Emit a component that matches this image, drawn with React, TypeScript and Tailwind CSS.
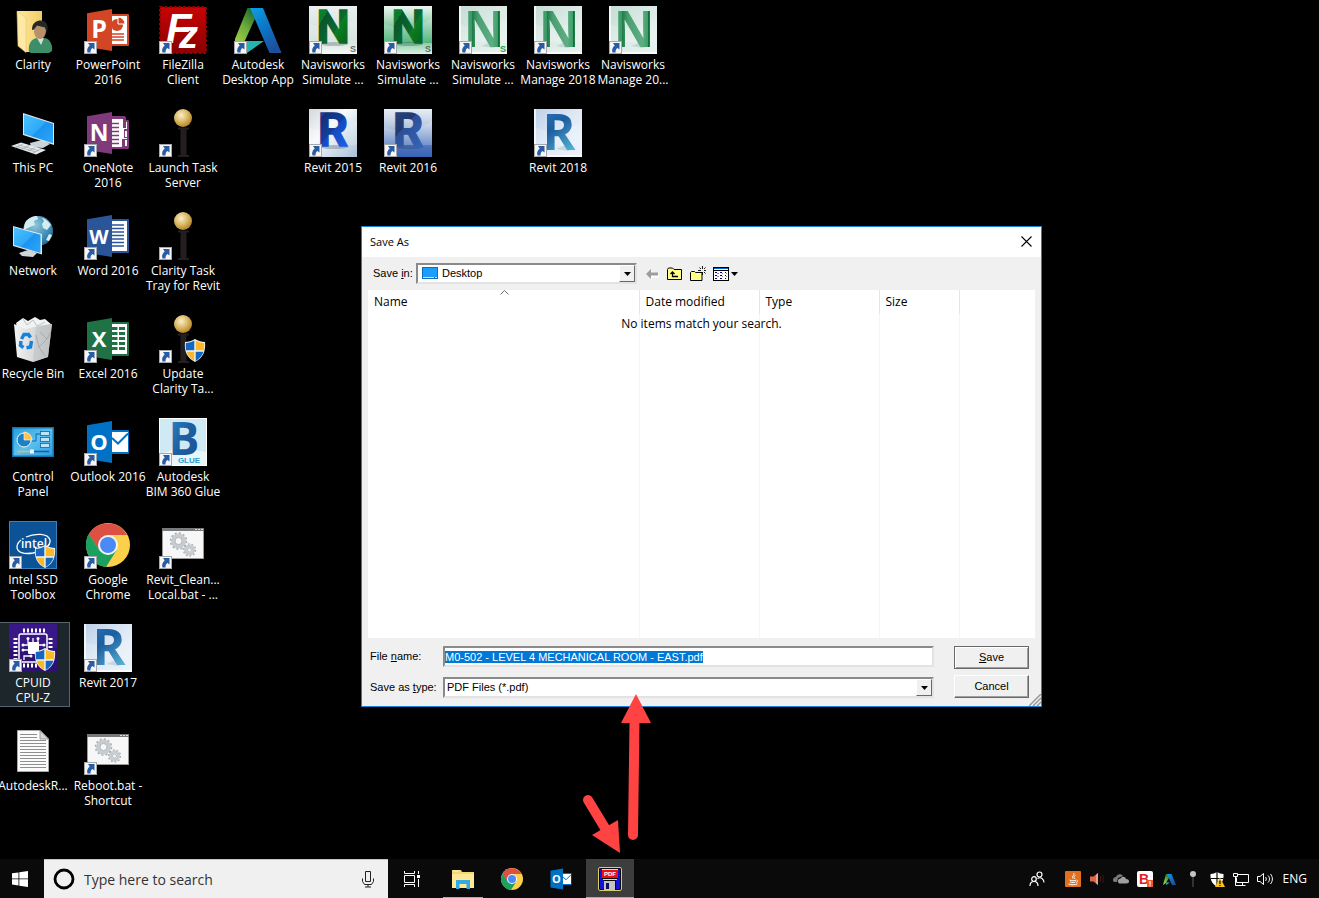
import { useEffect, useRef, type ReactNode } from "react"
import { clsx } from "clsx"

type IconProps = { className?: string }

// Gradients shared by all icons on the page
const Gradients = () => (
  <svg className="absolute size-0" aria-hidden="true">
    <defs>
      <linearGradient id="screen" x1="0" y1="0" x2="1" y2="1">
        <stop offset="0" stopColor="#4cc2ff" />
        <stop offset="0.5" stopColor="#2fa9f8" />
        <stop offset="0.52" stopColor="#1a94ee" />
        <stop offset="1" stopColor="#2ea6ff" />
      </linearGradient>
      <linearGradient id="folder" x1="0" y1="0" x2="1" y2="0">
        <stop offset="0" stopColor="#ffe9a2" />
        <stop offset="1" stopColor="#f0cd66" />
      </linearGradient>
      <linearGradient id="fz" x1="0" y1="0" x2="0" y2="1">
        <stop offset="0" stopColor="#c80404" />
        <stop offset="1" stopColor="#8a0000" />
      </linearGradient>
      <linearGradient id="adskGreen" x1="0.7" y1="0" x2="0.2" y2="1">
        <stop offset="0" stopColor="#1d6b2b" />
        <stop offset="0.5" stopColor="#6fae3c" />
        <stop offset="1" stopColor="#a4d04a" />
      </linearGradient>
      <linearGradient id="adskBlue" x1="0" y1="0" x2="0.6" y2="1">
        <stop offset="0" stopColor="#0f9fe2" />
        <stop offset="0.5" stopColor="#0c78c8" />
        <stop offset="1" stopColor="#1d4f9f" />
      </linearGradient>
      <radialGradient id="ball" cx="0.4" cy="0.35" r="0.7">
        <stop offset="0" stopColor="#fbeecb" />
        <stop offset="0.5" stopColor="#dcbb6a" />
        <stop offset="1" stopColor="#b07f1c" />
      </radialGradient>
      <radialGradient id="globe" cx="0.4" cy="0.3" r="0.8">
        <stop offset="0" stopColor="#8fc7dd" />
        <stop offset="0.6" stopColor="#3f8db3" />
        <stop offset="1" stopColor="#235f85" />
      </radialGradient>
      <linearGradient id="tileLight" x1="0" y1="0" x2="1" y2="1">
        <stop offset="0" stopColor="#d3d8de" />
        <stop offset="0.4" stopColor="#f8fafc" />
        <stop offset="1" stopColor="#a9c0d8" />
      </linearGradient>
      <linearGradient id="tileGreen" x1="0" y1="0" x2="0" y2="1">
        <stop offset="0" stopColor="#eef7f0" />
        <stop offset="0.75" stopColor="#36a866" />
        <stop offset="0.78" stopColor="#8ed0a8" />
        <stop offset="1" stopColor="#dff0e6" />
      </linearGradient>
      <linearGradient id="tileMint" x1="0" y1="0" x2="1" y2="1">
        <stop offset="0" stopColor="#c5dcd5" />
        <stop offset="0.5" stopColor="#dcebe6" />
        <stop offset="1" stopColor="#e9f3ef" />
      </linearGradient>
      <linearGradient id="tileGrey" x1="0" y1="0" x2="0" y2="1">
        <stop offset="0" stopColor="#eceff2" />
        <stop offset="0.7" stopColor="#cfe0d9" />
        <stop offset="0.78" stopColor="#dde9e3" />
        <stop offset="1" stopColor="#f6faf8" />
      </linearGradient>
      <linearGradient id="tileBlue" x1="0" y1="0" x2="0" y2="1">
        <stop offset="0" stopColor="#e9eef5" />
        <stop offset="0.35" stopColor="#b9c9e2" />
        <stop offset="0.8" stopColor="#4a72bd" />
        <stop offset="1" stopColor="#3a62b4" />
      </linearGradient>
      <linearGradient id="tileSky" x1="0" y1="0" x2="1" y2="1">
        <stop offset="0" stopColor="#bcd0ea" />
        <stop offset="0.5" stopColor="#dfe9f5" />
        <stop offset="1" stopColor="#eef4fb" />
      </linearGradient>
      <linearGradient id="navOld" x1="0" y1="0" x2="1" y2="1">
        <stop offset="0" stopColor="#0b8a33" />
        <stop offset="0.28" stopColor="#0a7a2e" />
        <stop offset="0.28" stopColor="#0a5528" />
        <stop offset="0.58" stopColor="#0b6a30" />
        <stop offset="0.58" stopColor="#0a7f22" />
        <stop offset="1" stopColor="#07561c" />
      </linearGradient>
      <linearGradient id="navNew" x1="0" y1="0" x2="1" y2="0">
        <stop offset="0" stopColor="#57a97d" />
        <stop offset="0.2" stopColor="#3c9867" />
        <stop offset="0.2" stopColor="#1b7a45" />
        <stop offset="0.35" stopColor="#4a9f71" />
        <stop offset="0.7" stopColor="#5fae84" />
        <stop offset="0.85" stopColor="#3f9c69" />
        <stop offset="0.85" stopColor="#0c7038" />
        <stop offset="1" stopColor="#157d42" />
      </linearGradient>
      <linearGradient id="revitOld" x1="0" y1="0" x2="0.6" y2="1">
        <stop offset="0" stopColor="#1b4fae" />
        <stop offset="0.25" stopColor="#163f92" />
        <stop offset="0.25" stopColor="#123079" />
        <stop offset="0.6" stopColor="#143f9c" />
        <stop offset="0.6" stopColor="#1449c0" />
        <stop offset="1" stopColor="#1f5fe0" />
      </linearGradient>
      <linearGradient id="revit16" x1="0" y1="0" x2="0.6" y2="1">
        <stop offset="0" stopColor="#2a4684" />
        <stop offset="0.5" stopColor="#243a70" />
        <stop offset="0.5" stopColor="#2c4f96" />
        <stop offset="1" stopColor="#3663b4" />
      </linearGradient>
      <linearGradient id="revitNew" x1="0" y1="0" x2="0.4" y2="1">
        <stop offset="0" stopColor="#2f7fc9" />
        <stop offset="0.5" stopColor="#1c5d9f" />
        <stop offset="1" stopColor="#58b4d6" />
      </linearGradient>
      <linearGradient id="glueInk" x1="0" y1="0" x2="1" y2="1">
        <stop offset="0" stopColor="#2d8fcb" />
        <stop offset="0.5" stopColor="#1d5fa3" />
        <stop offset="1" stopColor="#1a4f90" />
      </linearGradient>
      <linearGradient id="bin" x1="0" y1="0" x2="1" y2="0">
        <stop offset="0" stopColor="#f4f4f4" />
        <stop offset="0.5" stopColor="#d9dadb" />
        <stop offset="1" stopColor="#b5b7b9" />
      </linearGradient>
      <linearGradient id="panel" x1="0" y1="0" x2="1" y2="1">
        <stop offset="0" stopColor="#2a9fdc" />
        <stop offset="0.5" stopColor="#5cc0f0" />
        <stop offset="1" stopColor="#2f9fe0" />
      </linearGradient>
    </defs>
  </svg>
)

const Svg = ({ className, children }: IconProps & { children: ReactNode }) => (
  <svg viewBox="0 0 48 48" className={clsx("shrink-0 overflow-visible", className)} aria-hidden="true">
    {children}
  </svg>
)

const ShortcutArrow = () => (
  <svg viewBox="0 0 13 13" className="absolute bottom-0 left-0 size-[13px]" aria-hidden="true">
    <rect x="0.5" y="0.5" width="12" height="12" fill="#f6f6f6" stroke="#a8a8a8" />
    <path d="M4 2h6.500v6.500L8.500 7C7 8 6.500 9 6.500 11.500H3.500C2.500 8.500 3.500 6.500 5.700 4.400z" fill="#2a5ca5" />
  </svg>
)

const Shield = () => (
  <g>
    <path d="M36 24c3 2 7 3 10 3 1 9-2 16-10 20-8-4-11-11-10-20 3 0 7-1 10-3z" fill="#f0f4f8" />
    <path d="M35.3 25.5v9.800h-8.200c-.4-2.500-.5-5-.3-7.400 3 0 6-1 8.500-2.400zM36.700 36.700h7.800c-1.300 4-3.900 7-7.800 9.200z" fill="#1466c0" />
    <path d="M36.7 25.5v9.800h8.200c.4-2.500.5-5 .3-7.400-3 0-6-1-8.500-2.400zM35.300 36.700h-7.800c1.300 4 3.900 7 7.800 9.200z" fill="#fbb829" />
  </g>
)

const UserFolderIcon = ({ className }: IconProps) => (
  <Svg className={className}>
    <path d="M8 5h25v41H16z" fill="url(#folder)" />
    <path d="M8 5l9 7v34.500L9 40z" fill="#ffe9a6" stroke="#e7c565" strokeWidth="0.6" />
    <path d="M20 46c-1-8 2-13 8-14l4 2 4-2c5 1 8 7 7 13l-3 2H22z" fill="#3d8d68" />
    <path d="M28 32l4 7 3-7z" fill="#cfe3d8" />
    <ellipse cx="31" cy="25" rx="6" ry="8" fill="#b78f6b" />
    <path d="M23 24c0-7 4-9.500 9-9.500s8 4 6 12l-2-5-8-2-3 4z" fill="#262626" />
  </Svg>
)

const ThisPcIcon = ({ className }: IconProps) => (
  <Svg className={className}>
    <path d="M21 34l12-3 8 4-7 4-12-1z" fill="#c9d3da" />
    <path d="M14 4l31 10v22L14 26z" fill="#dfe6ea" />
    <path d="M15 5.500l29 9.300v19.500L15 25z" fill="url(#screen)" />
    <path d="M2 37l10-3.500L37 41l-10 4.500z" fill="#e6eaec" />
    <path d="M6 37l21 6M9 35.800l21 6M6 39l8-4M12 40.500l8-4M18 42.500l8-4M24 44l8-4" stroke="#9aa5ab" strokeWidth="0.7" />
  </Svg>
)

const NetworkIcon = ({ className }: IconProps) => (
  <Svg className={className}>
    <circle cx="29" cy="19" r="15" fill="url(#globe)" />
    <path d="M17 9c4-4 8-5 11-5l1 3-4 2 1 4-5 2-6 3c0-3 0-6 2-9zM33 6c4 1 7 4 9 7l-4 5-4-2-1-4 2-3zM40 22l3 1-3 6-3-1z" fill="#d4ebf1" />
    <path d="M10 41l9-3 9 3-4 4-11-1z" fill="#cfd6da" />
    <path d="M4 14l29 8v20.500L4 34z" fill="#dfe6ea" />
    <path d="M5 15.300l26.500 7.400V41L5 33z" fill="url(#screen)" />
  </Svg>
)

const RecycleBinIcon = ({ className }: IconProps) => (
  <Svg className={className}>
    <path d="M7 8l7-5 5 3 7-4 5 3 5-1 7 6-4 7H9z" fill="#f1f2f2" />
    <path d="M14 4l4 6 6-5 4 6 8-4" stroke="#bfc3c5" fill="none" />
    <path d="M5 9l12 5 12-3 14-2-4 33-15 5-16-5z" fill="url(#bin)" />
    <path d="M27 12l16-3-4 33-15 5z" fill="#c3c6c8" opacity="0.7" />
    <path d="M31 17l7 7-8 8 6 9M30 32l-3-12M38 24l4-8" stroke="#9ea3a6" fill="none" strokeWidth="0.8" />
    <g fill="none" stroke="#1782dc" strokeWidth="3.5">
      <path d="M12.500 24l2.500-4.500h4.500l2 3" />
      <path d="M22.500 26l-1 6-4 .8" />
      <path d="M14.500 32.500l-3-2 .5-4.500" />
    </g>
  </Svg>
)

const ControlPanelIcon = ({ className }: IconProps) => (
  <Svg className={className}>
    <rect x="3" y="9" width="42" height="30" fill="#1574ae" />
    <rect x="4.5" y="10.5" width="39" height="27" fill="url(#panel)" />
    <circle cx="15" cy="22" r="7" fill="#1d7fc4" stroke="#eaf6fd" />
    <path d="M15 22v-8a8 8 0 0 1 8 8z" fill="#ffc24a" stroke="#fff" strokeWidth="0.6" />
    <path d="M23 23h4v-7h4" stroke="#1664a4" fill="none" />
    <g fill="#bfe4f8" stroke="#1664a4" strokeWidth="0.8">
      <rect x="31.5" y="13.5" width="9" height="4" />
      <rect x="31.5" y="19.5" width="9" height="4" />
      <rect x="31.5" y="25.5" width="9" height="4" />
    </g>
    <path d="M8 33.500h14" stroke="#ffb52b" strokeWidth="1.5" />
    <path d="M22 33.500h18" stroke="#0f5fa5" strokeWidth="1.5" />
    <rect x="21" y="31.5" width="4" height="4" fill="#eaf6fd" />
  </Svg>
)

const IntelIcon = ({ className }: IconProps) => (
  <Svg className={className}>
    <rect width="48" height="48" fill="#3c80bb" />
    <rect x="1" y="1" width="46" height="46" fill="#0b5296" />
    <path d="M17 16c9-4 22-4 24 3 1 6-7 11-17 13-9 1.500-16-.5-16-6 0-3 1.500-5 4-7" fill="none" stroke="#fff" strokeWidth="1.3" />
    <text x="12" y="27" fill="#fff" fontSize="12" fontWeight="600" fontFamily="Open Sans, sans-serif">
      intel
    </text>
    <Shield />
  </Svg>
)

const CpuzIcon = ({ className }: IconProps) => (
  <Svg className={className}>
    <rect width="48" height="48" fill="#3a1788" />
    <path d="M0 24h48v24H0z" fill="#2d1173" />
    <g stroke="#fff" fill="none">
      <rect x="10" y="10" width="28" height="28" rx="2" strokeWidth="1.5" />
      <path d="M14 6.500h22M14 41.500h14" strokeWidth="4" strokeDasharray="2 2" />
      <path d="M6.500 14v22M41.500 14v12" strokeWidth="4" strokeDasharray="2 2" />
      <path d="M19 20v-5M24 19v-5M29 20v-5M19 21h-5M19 26h-5M30 21h5M15 36v-4h6" strokeWidth="1.3" />
    </g>
    <rect x="19" y="18" width="11" height="12" rx="1" fill="#fff" />
    <g fill="#fff">
      <circle cx="19" cy="14.5" r="1.5" />
      <circle cx="29" cy="14.5" r="1.5" />
      <circle cx="14" cy="21" r="1.5" />
      <circle cx="14" cy="26" r="1.5" />
      <circle cx="35" cy="21" r="1.5" />
      <circle cx="22" cy="32" r="1.5" />
    </g>
    <Shield />
  </Svg>
)

const TextFileIcon = ({ className }: IconProps) => (
  <Svg className={className}>
    <path d="M8.500 3.500H31l8.500 8.500v32.500h-31z" fill="#fbfbfb" stroke="#a9a9a9" />
    <path d="M31 3.500l8.500 8.500H31z" fill="#d8d8d8" stroke="#8c8c8c" strokeWidth="0.8" />
    <path d="M11 7.500h17M11 10.500h17M11 13.500h26M11 16.500h26M11 19.500h26M11 22.500h26M11 25.500h26M11 28.500h26M11 31.500h26M11 34.500h26M11 37.500h26M11 40.500h26" stroke="#8f8f8f" />
  </Svg>
)

type OfficeIconProps = IconProps & { letter: string; size?: number; color: string; children: ReactNode }

const OfficeIcon = ({ className, letter, size = 22, color, children }: OfficeIconProps) => (
  <Svg className={className}>
    {children}
    <path d="M3 7.300L28 3v42L3 41z" fill={color} />
    <text x="15" y="32" textAnchor="middle" fill="#fff" fontSize={size} fontWeight="700" fontFamily="Open Sans, sans-serif">
      {letter}
    </text>
  </Svg>
)

const PowerPointIcon = ({ className }: IconProps) => (
  <OfficeIcon className={className} letter="P" size={25} color="#d24625">
    <rect x="24" y="8" width="21" height="32" rx="1" fill="#d24625" />
    <rect x="26" y="10" width="17" height="28" fill="#fff" />
    <circle cx="33" cy="19" r="6" fill="#d24625" />
    <path d="M34 18v-7a7 7 0 0 1 7 7z" fill="#d24625" stroke="#fff" />
    <path d="M28 28h12M28 31h12M28 34h12" stroke="#d24625" strokeWidth="1.5" />
  </OfficeIcon>
)

const OneNoteIcon = ({ className }: IconProps) => (
  <OfficeIcon className={className} letter="N" size={23} color="#80397b">
    <path d="M26 7h15l1 2v2h2l1 1v27l-1 1H26z" fill="#80397b" />
    <path d="M26 10h12v28H26z" fill="#fff" />
    <path d="M38 10h1v9h3v-6h1v7h-3v9h3v1h-5zM41 22h2v6h-2zM41 31h2v6h-2z" fill="#fff" />
    <path d="M28 14.500h7M28 18.500h7M28 22.500h7M28 26.500h7M28 30.500h7M28 34.500h7" stroke="#80397b" strokeWidth="1.6" />
  </OfficeIcon>
)

const WordIcon = ({ className }: IconProps) => (
  <OfficeIcon className={className} letter="W" size={20} color="#2a5699">
    <rect x="24" y="7" width="21" height="34" rx="1" fill="#2a5699" />
    <rect x="26" y="9" width="17" height="30" fill="#fff" />
    <path d="M28 13h12M28 16.500h12M28 20h12M28 23.500h12M28 27h12M28 30.500h12M28 34h12" stroke="#2a5699" strokeWidth="1.6" />
  </OfficeIcon>
)

const ExcelIcon = ({ className }: IconProps) => (
  <OfficeIcon className={className} letter="X" color="#207245">
    <rect x="24" y="7" width="21" height="34" rx="1" fill="#207245" />
    <rect x="26" y="9" width="17" height="30" fill="#fff" />
    <path d="M28 13.500h5.500M28 18.500h5.500M28 23.500h5.500M28 28.500h5.500M28 33.500h5.500M35 13.500h6M35 18.500h6M35 23.500h6M35 28.500h6M35 33.500h6" stroke="#207245" strokeWidth="3" />
  </OfficeIcon>
)

const OutlookIcon = ({ className }: IconProps) => (
  <OfficeIcon className={className} letter="O" color="#0072c6">
    <rect x="24" y="12" width="21" height="24" rx="1" fill="#0072c6" />
    <rect x="26" y="14" width="18" height="20" fill="#fff" />
    <path d="M28 20l6 5.500 10-10" stroke="#0072c6" strokeWidth="2" fill="none" />
  </OfficeIcon>
)

const FileZillaIcon = ({ className }: IconProps) => (
  <Svg className={className}>
    <rect x="1" y="1" width="46" height="46" fill="url(#fz)" />
    <rect x="1" y="1" width="46" height="46" fill="none" stroke="#8f0505" strokeWidth="2" strokeDasharray="2.600 2" />
    <g fill="#fff" fontWeight="700" fontStyle="italic" fontFamily="Liberation Sans, sans-serif">
      <text x="7" y="37" fontSize="42">
        F
      </text>
      <text x="20" y="42" fontSize="38">
        z
      </text>
    </g>
  </Svg>
)

const AutodeskIcon = ({ className }: IconProps) => (
  <Svg className={className}>
    <path d="M13.500 2H20l3 6L11 34.500 1 41V33z" fill="url(#adskGreen)" />
    <path d="M16 2h13l18.500 45H35.500z" fill="url(#adskBlue)" />
    <path d="M11.500 35H30L13 47z" fill="#23b5ae" />
  </Svg>
)

const PinIcon = ({ className, shield }: IconProps & { shield?: boolean }) => (
  <Svg className={className}>
    <path d="M19 18.500h11v2h-2.500v25.500H30v2H19v-2h2.500V20.500H19z" fill="#231f20" />
    <circle cx="24" cy="9" r="9" fill="url(#ball)" />
    {shield && <Shield />}
  </Svg>
)

const ChromeIcon = ({ className }: IconProps) => (
  <Svg className={className}>
    <circle cx="24" cy="24" r="22" fill="#fdd04c" />
    <path d="M4.900 13A22 22 0 0 0 22 45.900L32.700 29 24 34l-9-5z" fill="#1ba15f" />
    <path d="M4.900 13l10 16 9-5-5-9z" fill="#1ba15f" />
    <path d="M24 14h19.100A22 22 0 0 0 4.900 13L15 28z" fill="#dd5044" />
    <circle cx="24" cy="24" r="10" fill="#f4f4f4" />
    <circle cx="24" cy="24" r="8" fill="#4a8af4" />
  </Svg>
)

const BatchFileIcon = ({ className }: IconProps) => (
  <Svg className={className}>
    <rect x="3.5" y="7.5" width="41" height="30" fill="#f7f7f7" stroke="#9a9a9a" />
    <path d="M3 7h42v3H3z" fill="#77797b" />
    <path d="M36 8.500h2M39 8.500h2M42 8.500h2" stroke="#dcdcdc" />
    <circle cx="19.5" cy="20" r="5.5" fill="none" stroke="#c7ccd0" strokeWidth="4" />
    <circle cx="19.5" cy="20" r="8" fill="none" stroke="#a7adb1" strokeWidth="1.5" strokeDasharray="2 2.200" />
    <circle cx="19.5" cy="20" r="3.5" fill="none" stroke="#a7adb1" strokeWidth="0.8" />
    <circle cx="30.5" cy="29" r="4" fill="none" stroke="#c7ccd0" strokeWidth="3" />
    <circle cx="30.5" cy="29" r="6" fill="none" stroke="#a7adb1" strokeWidth="1.3" strokeDasharray="1.800 1.900" />
    <circle cx="30.5" cy="29" r="2" fill="none" stroke="#a7adb1" strokeWidth="0.8" />
  </Svg>
)

type TileIconProps = IconProps & {
  letter: string
  tile: string
  ink: string
  mark?: string
  markColor?: string
  faceted?: boolean
}

// Square product tile with one large letter and an optional edition mark
const TileIcon = ({ className, letter, tile, ink, mark, markColor, faceted }: TileIconProps) => (
  <Svg className={className}>
    <rect width="48" height="48" fill={tile} />
    <path d="M0 18c14 6 34 4 48-6v24H0z" fill="#fff" opacity="0.18" />
    {!faceted && <path d="M0 0h2v46h46v2H0z" fill="#fff" opacity="0.7" />}
    {!faceted && <path d="M22 40l10-4 9 3-7 3z" fill="#6f8f9c" opacity="0.25" />}
    {faceted && <ellipse cx="25" cy="38" rx="14" ry="2" fill="#20303a" opacity="0.25" />}
    {faceted ? (
      <text x="24" y="37" textAnchor="middle" fill={ink} stroke={ink} strokeWidth="1.5" fontSize="47" fontWeight="700" fontFamily="Liberation Sans Narrow, Roboto, sans-serif">
        {letter}
      </text>
    ) : (
      <text x="25" y="41" textAnchor="middle" fill={ink} fontSize="50" fontWeight="700" fontFamily="Open Sans, sans-serif">
        {letter}
      </text>
    )}
    {mark && (
      <text x="44" y="46" textAnchor="middle" fill={markColor} fontSize="9" fontWeight="700" fontFamily="Liberation Sans, sans-serif">
        {mark}
      </text>
    )}
  </Svg>
)

const BimGlueIcon = ({ className }: IconProps) => (
  <Svg className={className}>
    <rect width="48" height="48" fill="#fff" />
    <rect x="1" y="1" width="46" height="46" fill="#cfeaf5" />
    <path d="M1 36l18-6 28 4v13H1z" fill="#e8f6fb" />
    <text x="25" y="37" textAnchor="middle" fill="url(#glueInk)" fontSize="46" fontWeight="700" fontFamily="Open Sans, sans-serif">
      B
    </text>
    <text x="30" y="45" textAnchor="middle" fill="#2a9bc9" fontSize="8" fontWeight="700" fontFamily="Liberation Sans, sans-serif">
      GLUE
    </text>
  </Svg>
)

type DesktopItem = {
  id: string
  label: string[]
  icon: ReactNode
  shortcut?: boolean
  selected?: boolean
}

const tile = "size-12"

const simulate = (id: string, bg: string, ink: string, faceted: boolean, markColor: string): DesktopItem => ({
  id,
  label: ["Navisworks", "Simulate ..."],
  icon: <TileIcon className={tile} letter="N" tile={bg} ink={ink} faceted={faceted} mark="S" markColor={markColor} />,
  shortcut: true,
})

// One array per column, null leaves an empty cell
const columns: (DesktopItem | null)[][] = [
  [
    { id: "clarity", label: ["Clarity"], icon: <UserFolderIcon className={tile} /> },
    { id: "pc", label: ["This PC"], icon: <ThisPcIcon className={tile} /> },
    { id: "network", label: ["Network"], icon: <NetworkIcon className={tile} /> },
    { id: "bin", label: ["Recycle Bin"], icon: <RecycleBinIcon className={tile} /> },
    { id: "control", label: ["Control", "Panel"], icon: <ControlPanelIcon className={tile} /> },
    { id: "intel", label: ["Intel SSD", "Toolbox"], icon: <IntelIcon className={tile} />, shortcut: true },
    { id: "cpuz", label: ["CPUID", "CPU-Z"], icon: <CpuzIcon className={tile} />, shortcut: true, selected: true },
    { id: "autodeskr", label: ["AutodeskR..."], icon: <TextFileIcon className={tile} /> },
  ],
  [
    { id: "powerpoint", label: ["PowerPoint", "2016"], icon: <PowerPointIcon className={tile} />, shortcut: true },
    { id: "onenote", label: ["OneNote", "2016"], icon: <OneNoteIcon className={tile} />, shortcut: true },
    { id: "word", label: ["Word 2016"], icon: <WordIcon className={tile} />, shortcut: true },
    { id: "excel", label: ["Excel 2016"], icon: <ExcelIcon className={tile} />, shortcut: true },
    { id: "outlook", label: ["Outlook 2016"], icon: <OutlookIcon className={tile} />, shortcut: true },
    { id: "chrome", label: ["Google", "Chrome"], icon: <ChromeIcon className={tile} />, shortcut: true },
    { id: "revit2017", label: ["Revit 2017"], icon: <TileIcon className={tile} letter="R" tile="url(#tileSky)" ink="url(#revitNew)" />, shortcut: true },
    { id: "reboot", label: ["Reboot.bat -", "Shortcut"], icon: <BatchFileIcon className={tile} />, shortcut: true },
  ],
  [
    { id: "filezilla", label: ["FileZilla", "Client"], icon: <FileZillaIcon className={tile} />, shortcut: true },
    { id: "launch", label: ["Launch Task", "Server"], icon: <PinIcon className={tile} />, shortcut: true },
    { id: "tray", label: ["Clarity Task", "Tray for Revit"], icon: <PinIcon className={tile} />, shortcut: true },
    { id: "update", label: ["Update", "Clarity Ta..."], icon: <PinIcon className={tile} shield />, shortcut: true },
    { id: "glue", label: ["Autodesk", "BIM 360 Glue"], icon: <BimGlueIcon className={tile} />, shortcut: true },
    { id: "clean", label: ["Revit_Clean...", "Local.bat - ..."], icon: <BatchFileIcon className={tile} />, shortcut: true },
  ],
  [{ id: "adsk", label: ["Autodesk", "Desktop App"], icon: <AutodeskIcon className={tile} />, shortcut: true }],
  [
    simulate("sim15", "url(#tileGrey)", "url(#navOld)", true, "#6b6b6b"),
    { id: "revit2015", label: ["Revit 2015"], icon: <TileIcon className={tile} letter="R" tile="url(#tileLight)" ink="url(#revitOld)" faceted />, shortcut: true },
  ],
  [
    simulate("sim16", "url(#tileGreen)", "url(#navOld)", true, "#5f6b64"),
    { id: "revit2016", label: ["Revit 2016"], icon: <TileIcon className={tile} letter="R" tile="url(#tileBlue)" ink="url(#revit16)" faceted />, shortcut: true },
  ],
  [simulate("sim17", "url(#tileMint)", "url(#navNew)", false, "#16a34a")],
  [
    { id: "manage18", label: ["Navisworks", "Manage 2018"], icon: <TileIcon className={tile} letter="N" tile="url(#tileMint)" ink="url(#navNew)" />, shortcut: true },
    { id: "revit2018", label: ["Revit 2018"], icon: <TileIcon className={tile} letter="R" tile="url(#tileSky)" ink="url(#revitNew)" />, shortcut: true },
  ],
  [{ id: "manage20", label: ["Navisworks", "Manage 20..."], icon: <TileIcon className={tile} letter="N" tile="url(#tileMint)" ink="url(#navNew)" />, shortcut: true }],
]

const DesktopIcon = ({ item }: { item: DesktopItem }) => (
  <button
    type="button"
    className={clsx(
      "flex w-[74px] flex-col items-center gap-[3px] border pt-px pb-px text-center text-xs leading-[15px] text-white",
      item.selected ? "border-[#56646d] bg-[#1c262b]" : "border-transparent"
    )}
  >
    <span className="relative block size-12">
      {item.icon}
      {item.shortcut && <ShortcutArrow />}
    </span>
    <span className="flex flex-col items-center whitespace-nowrap">
      {item.label.map((line) => (
        <span key={line}>{line}</span>
      ))}
    </span>
  </button>
)

const DropArrow = () => (
  <span className="pointer-events-none absolute top-[2px] right-[2px] bottom-[2px] flex w-4 items-center justify-center border border-t-white border-r-[#696969] border-b-[#696969] border-l-white bg-[#f0f0f0]">
    <svg viewBox="0 0 7 4" className="h-1 w-[7px]" aria-hidden="true">
      <path d="M0 0h7L3.500 4z" fill="#000" />
    </svg>
  </span>
)

const sunken =
  "border-2 border-t-[#8a8a8a] border-r-[#e3e3e3] border-b-[#e3e3e3] border-l-[#8a8a8a] bg-white"

const FileDialog = () => {
  const nameRef = useRef<HTMLInputElement>(null)

  useEffect(() => {
    nameRef.current?.focus()
    nameRef.current?.select()
  }, [])

  return (
    <section
      role="dialog"
      aria-labelledby="dialog-title"
      className="absolute top-[226px] left-[361px] flex w-[681px] flex-col border border-[#1883d7] bg-[#f0f0f0] text-black"
    >
      <header className="flex h-[30px] items-center justify-between bg-white pr-[7px] pl-2">
        <h1 id="dialog-title" className="text-[11px]">
          Save As
        </h1>
        <button type="button" aria-label="Close" className="flex h-7 w-4 items-center justify-center self-start">
          <svg viewBox="0 0 11 11" className="size-[11px]" aria-hidden="true">
            <path d="M0.500 0.500l10 10M10.500 0.500l-10 10" stroke="#000" strokeWidth="1.1" />
          </svg>
        </button>
      </header>

      <div className="flex h-[33px] items-center pl-[11px] font-['Liberation_Sans',sans-serif] text-[11px]">
        <label htmlFor="save-in" className="w-[43px]">
          Save <u>i</u>n:
        </label>
        <div className="relative w-[221px]">
          <select id="save-in" className={clsx("block h-[21px] w-full appearance-none pl-6 outline-none", sunken)}>
            <option>Desktop</option>
          </select>
          <svg viewBox="0 0 16 12" className="absolute top-[4px] left-[6px] h-3 w-4" aria-hidden="true">
            <rect width="16" height="12" fill="#0a6ebd" />
            <rect x="1" y="1" width="14" height="9" fill="#1c9dfb" />
            <path d="M1 10.500h11M13 10.500h2" stroke="#fff" strokeWidth="0.8" />
          </svg>
          <DropArrow />
        </div>
        <div className="flex items-center gap-[7px] pl-[7px]">
          <button type="button" aria-label="Back">
            <svg viewBox="0 0 16 16" className="size-4" aria-hidden="true">
              <path d="M3 9l5-4.500V7.500h7v4H8V14z" fill="#fff" />
              <path d="M2 8l5-5v3.500h7v3H7V13z" fill="#9d9d9d" />
            </svg>
          </button>
          <button type="button" aria-label="Up one level">
            <svg viewBox="0 0 16 16" className="size-4" aria-hidden="true">
              <path d="M0.500 13.500v-10l1-1.500h4l1.500 1.500h7.500v10z" fill="#ffff8a" stroke="#000" />
              <path d="M5.500 6v4.500H11M3.500 8l2-2 2 2" fill="none" stroke="#000" strokeWidth="1.3" />
            </svg>
          </button>
          <button type="button" aria-label="Create new folder">
            <svg viewBox="0 0 16 16" className="size-4" aria-hidden="true">
              <path d="M0.500 14.500v-8l1-1h3l1 1h6.500v8z" fill="#ffff8a" stroke="#000" />
              <path d="M12.500 0v3M12.500 6v3M8 4.500h3M14 4.500h2M9.500 1.500l1.500 1.500M15.500 1.500L14 3M14 6l1.500 1.500" stroke="#000" strokeWidth="0.9" />
            </svg>
          </button>
          <button type="button" aria-label="View menu">
            <svg viewBox="0 0 26 16" className="h-4 w-[26px]" aria-hidden="true">
              <rect x="0.5" y="1.5" width="15" height="13" fill="#fff" stroke="#000" />
              <path d="M1 2h14v1H1z" fill="#0a64c8" />
              <path d="M0 4.500h16" stroke="#000" />
              <path d="M2 6.500h2M7 6.500h2M12 6.500h1M2 9.500h2M7 9.500h2M12 9.500h1M2 12.500h2M7 12.500h2M12 12.500h1" stroke="#000080" />
              <path d="M4 7.500h2M9 7.500h1M13 7.500h1M4 10.500h2M9 10.500h1M13 10.500h1" stroke="#888" />
              <path d="M18 6h7l-3.500 4z" fill="#000" />
            </svg>
          </button>
        </div>
      </div>

      <div className="relative mr-[6px] ml-[6px] h-[348px] bg-white text-xs">
        <svg viewBox="0 0 9 5" className="absolute top-0 left-[132px] h-[5px] w-[9px]" aria-hidden="true">
          <path d="M0.500 4.500l4-4 4 4" fill="none" stroke="#6d6d6d" />
        </svg>
        <table className="h-full w-full table-fixed border-collapse">
          <thead>
            <tr className="h-6 text-left">
              <th className="w-[271px] border-r border-[#e5e5e5] pl-[6px] font-normal">Name</th>
              <th className="w-[120px] border-r border-[#e5e5e5] pl-[6px] font-normal">Date modified</th>
              <th className="w-[120px] border-r border-[#e5e5e5] pl-[6px] font-normal">Type</th>
              <th className="w-[80px] border-r border-[#e5e5e5] pl-[6px] font-normal">Size</th>
              <td />
            </tr>
          </thead>
          <tbody>
            <tr>
              <td className="border-r border-[#f2f5f9]" />
              <td className="border-r border-[#f2f5f9]" />
              <td className="border-r border-[#f2f5f9]" />
              <td className="border-r border-[#f2f5f9]" />
              <td />
            </tr>
          </tbody>
        </table>
        <p className="absolute inset-x-0 top-[26px] text-center leading-4">No items match your search.</p>
      </div>

      <div className="flex justify-between pt-2 pr-3 pb-2 pl-2 font-['Liberation_Sans',sans-serif] text-[11px]">
        <div className="flex grow flex-col gap-[10px]">
          <div className="flex items-center">
            <label htmlFor="file-name" className="w-[73px]">
              File <u>n</u>ame:
            </label>
            <input
              id="file-name"
              ref={nameRef}
              type="text"
              defaultValue="M0-502 - LEVEL 4 MECHANICAL ROOM - EAST.pdf"
              className={clsx("h-[21px] w-[491px] outline-none selection:bg-[#0078d7] selection:text-white", sunken)}
            />
          </div>
          <div className="flex items-center">
            <label htmlFor="file-type" className="w-[73px]">
              Save as <u>t</u>ype:
            </label>
            <div className="relative w-[491px]">
              <select id="file-type" className={clsx("block h-[21px] w-full appearance-none pl-[2px] outline-none", sunken)}>
                <option>PDF Files (*.pdf)</option>
              </select>
              <DropArrow />
            </div>
          </div>
        </div>
        <div className="flex w-[75px] flex-col gap-[6px]">
          <button type="button" className="h-[23px] border border-[#696969] shadow-[inset_1px_1px_#fff,inset_-1px_-1px_#a0a0a0]">
            <u>S</u>ave
          </button>
          <button type="button" className="h-[23px] border border-t-white border-r-[#696969] border-b-[#696969] border-l-white shadow-[inset_-1px_-1px_#a0a0a0]">
            Cancel
          </button>
        </div>
      </div>
      <svg viewBox="0 0 12 12" className="absolute right-0 bottom-0 size-3" aria-hidden="true">
        <path d="M0 12L12 0M4 12l8-8M8 12l4-4" stroke="#9a9a9a" strokeWidth="1.5" />
      </svg>
    </section>
  )
}

const Arrows = () => (
  <svg viewBox="0 0 80 170" className="pointer-events-none absolute top-[690px] left-[580px] h-[170px] w-20" aria-hidden="true">
    <g stroke="#ff4343" strokeWidth="10" strokeLinecap="round">
      <path d="M54.500 32L53 145" />
      <path d="M8 110l20 33" />
    </g>
    <path d="M56 4l15 29H41zM40 163L12 145l26-15z" fill="#ff4343" />
  </svg>
)

const ExplorerIcon = ({ className }: IconProps) => (
  <svg viewBox="0 0 22 20" className={className} aria-hidden="true">
    <path d="M0 1h9l1 2h12v16H0z" fill="#f7d774" />
    <path d="M0 5h22v14H0z" fill="#ffe898" />
    <path d="M1 2h6" stroke="#fff4c8" />
    <path d="M4 11h14v9h-3.500v-5h-7v5H4z" fill="#35a9e0" />
  </svg>
)

const PdfDiskIcon = ({ className }: IconProps) => (
  <svg viewBox="0 0 24 24" className={className} aria-hidden="true">
    <rect x="0.5" y="0.5" width="23" height="23" rx="1.5" fill="#0c0c0c" stroke="#d8d060" />
    <path d="M2 2h2v20H2zM20 2h2v20h-2z" fill="#1212e0" />
    <path d="M3 12h3v10H3zM18 12h3v10h-3z" fill="#1212e0" />
    <rect x="4" y="3" width="16" height="8" fill="#e81010" />
    <path d="M4 2.500h16M5 12.500h14" stroke="#d8d8d8" strokeWidth="1" />
    <text x="12" y="9" textAnchor="middle" fill="#fff" fontSize="6" fontWeight="700" fontFamily="Liberation Sans, sans-serif">
      PDF
    </text>
    <rect x="6" y="14" width="11" height="9" fill="#c4c4c4" />
    <rect x="8" y="16" width="3" height="6" fill="#101060" />
  </svg>
)

const TaskButton = ({ label, open, active, children }: { label: string; open?: boolean; active?: boolean; children: ReactNode }) => (
  <button type="button" aria-label={label} className={clsx("relative flex h-full w-12 items-center justify-center", active && "bg-[#3d3d3d]")}>
    {children}
    {open && <span className={clsx("absolute bottom-0 h-px bg-[#76b9ed]", active ? "inset-x-0" : "inset-x-1")} />}
  </button>
)

const TrayButton = ({ label, children }: { label: string; children: ReactNode }) => (
  <button type="button" aria-label={label} className="flex w-6 items-center justify-center">
    <svg viewBox="0 0 16 16" className="size-4" aria-hidden="true">
      {children}
    </svg>
  </button>
)

const Taskbar = () => (
  <footer className="flex h-[39px] items-stretch bg-[#0a0a0a] text-white">
    <button type="button" aria-label="Start" className="flex w-11 items-center justify-center pr-1">
      <svg viewBox="0 0 16 16" className="size-4" aria-hidden="true">
        <path d="M0 2.300L6.500 1.400v6.100H0zM7.300 1.300L16 0v7.500H7.300zM0 8.300h6.500v6.200L0 13.600zM7.300 8.300H16V16l-8.700-1.300z" fill="#fff" />
      </svg>
    </button>
    <div className="flex w-[344px] items-center border-t border-[#c4c4c4] bg-[#f0f0f0] pr-[13px] pl-[9px]">
      <svg viewBox="0 0 22 22" className="size-[22px] shrink-0" aria-hidden="true">
        <circle cx="11" cy="11" r="9" fill="none" stroke="#000" strokeWidth="2.8" />
      </svg>
      <input
        type="text"
        aria-label="Search"
        placeholder="Type here to search"
        className="min-w-0 grow bg-transparent pt-px pl-[9px] text-sm text-[#222] outline-none placeholder:text-[#333]"
      />
      <svg viewBox="0 0 14 18" className="h-[18px] w-[14px] shrink-0" aria-hidden="true">
        <path d="M4.500 1.500h5v10h-5zM1.500 8.500v3l2 3h7l2-3v-3M7 14.500v2.500M4 17h6" fill="none" stroke="#222" />
      </svg>
    </div>
    <div className="flex gap-px">
      <TaskButton label="Task view">
        <svg viewBox="0 0 16 16" className="size-4" aria-hidden="true">
          <path d="M0.500 0v2.500h10V0M0.500 16v-2.500h10V16M0.500 4.500h10v7h-10zM14.500 0v3M14.500 8v8" fill="none" stroke="#fff" />
          <path d="M13 4h3v3h-3z" fill="#fff" />
        </svg>
      </TaskButton>
      <div className="flex gap-px pl-[2px]">
        <TaskButton label="File Explorer" open>
          <ExplorerIcon className="h-5 w-[22px]" />
        </TaskButton>
        <TaskButton label="Google Chrome">
          <ChromeIcon className="size-6" />
        </TaskButton>
        <TaskButton label="Outlook">
          <OutlookIcon className="size-6" />
        </TaskButton>
        <TaskButton label="PDF driver" open active>
          <PdfDiskIcon className="size-6" />
        </TaskButton>
      </div>
    </div>
    <div className="ml-auto flex items-stretch pr-3">
      <div className="flex pr-3">
        <TrayButton label="People">
          <g fill="none" stroke="#fff" strokeWidth="1.2">
            <circle cx="10.5" cy="3.5" r="2.5" />
            <circle cx="5" cy="8" r="2.3" />
            <path d="M1 15c0-6 8-6 8 0M8.500 7.500C12 5.500 15 8 15 11.500" />
          </g>
        </TrayButton>
      </div>
      <TrayButton label="Java">
        <rect width="16" height="16" rx="1" fill="#e0701c" />
        <path d="M8.500 2c2 2-2.500 3-.5 5.500M10.500 4.500C8 6 9 6.500 9.500 8M4.500 9c2 1 5 1 7 0M5 11c2 .8 4 .8 5.500 0M3.500 13c3 1 6 1 9 0M12 9.500c1.500.5 0 2-1 2" fill="none" stroke="#fff" />
      </TrayButton>
      <TrayButton label="Audio manager">
        <path d="M1 5.500h3.500L9 2v12L4.500 10.500H1z" fill="#d9684a" />
        <path d="M9 2v12l-2-2V4z" fill="#f0a08a" />
        <path d="M11.500 5v6M14 4v8" stroke="#3a1810" />
      </TrayButton>
      <TrayButton label="OneDrive">
        <path d="M0 9c0-2 1.500-3 3-3 1-3 5-4 7-1l-5 2-1 4H1.500C.5 11 0 10 0 9z" fill="#7a7a7a" />
        <path d="M5 10c0-1.500 1-2.500 2.500-2.500 1.500-2.500 5-2 5.500.5 4 0 4 4.500.5 4.500h-7C5.500 12.500 5 11.500 5 10z" fill="#a0a0a0" />
      </TrayButton>
      <TrayButton label="Bluebeam">
        <rect width="16" height="16" rx="2" fill="#fff" />
        <text x="7" y="13" textAnchor="middle" fill="#e01f26" fontSize="14" fontWeight="700" fontFamily="Liberation Sans, sans-serif">
          B
        </text>
        <rect x="10" y="9" width="6" height="7" fill="#f0592b" />
        <path d="M13 10v3.500M13 14.300v1" stroke="#fff" strokeWidth="1.3" />
      </TrayButton>
      <TrayButton label="Autodesk">
        <path d="M5 3h3l1 2-4 7-3 2z" fill="url(#adskGreen)" />
        <path d="M6 3h4.500L15 14h-4z" fill="url(#adskBlue)" />
        <path d="M5 11.500h4L5 14z" fill="#23b5ae" />
      </TrayButton>
      <TrayButton label="Clarity">
        <path d="M8 5v11" stroke="#333" strokeWidth="2" />
        <circle cx="8" cy="3" r="3" fill="#c4c4c4" />
      </TrayButton>
      <TrayButton label="Security">
        <path d="M8 1c2 1.300 4 2 6.500 2 .3 6-1.500 10-6.500 12.500C3 13 1.200 9 1.500 3 4 3 6 2.300 8 1z" fill="#fff" />
        <path d="M8 1v14.500M1.500 7.500h13" stroke="#0a0a0a" strokeWidth="1.2" />
        <path d="M11 6.500l5 9.500H6z" fill="#fcc21b" />
        <path d="M11 9.500v3.500M11 14v1" stroke="#000" strokeWidth="1.2" />
      </TrayButton>
      <TrayButton label="Ethernet">
        <path d="M4.500 3.500h11v8H3.500V6.500M0.500 2.500h4v3h-4zM2.500 5.500v9M9.500 11.500v3M2.500 14.500h10" fill="none" stroke="#fff" />
      </TrayButton>
      <TrayButton label="Volume">
        <path d="M0.500 5.500H3L6.500 2.500v11L3 10.500H0.500z" fill="none" stroke="#fff" />
        <path d="M8.500 6c1 1.200 1 2.800 0 4M11 4.500c2 2 2 5 0 7M13.500 3c2.500 3 2.500 7 0 10" fill="none" stroke="#fff" />
      </TrayButton>
      <button type="button" className="pl-[6px] text-xs">
        ENG
      </button>
    </div>
  </footer>
)

const App = () => {
  return (
    <div className="relative flex min-h-screen flex-col overflow-hidden bg-black font-['Open_Sans',sans-serif]">
      <Gradients />
      <main className="-ml-1 flex grow items-start gap-px pt-1">
        {columns.map((column, index) => (
          <div key={index} className="flex flex-col">
            {column.map((item, row) => (
              <div key={item?.id ?? row} className="h-[103px] w-[74px]">
                {item && <DesktopIcon item={item} />}
              </div>
            ))}
          </div>
        ))}
      </main>
      <FileDialog />
      <Arrows />
      <Taskbar />
    </div>
  )
}

export default App
